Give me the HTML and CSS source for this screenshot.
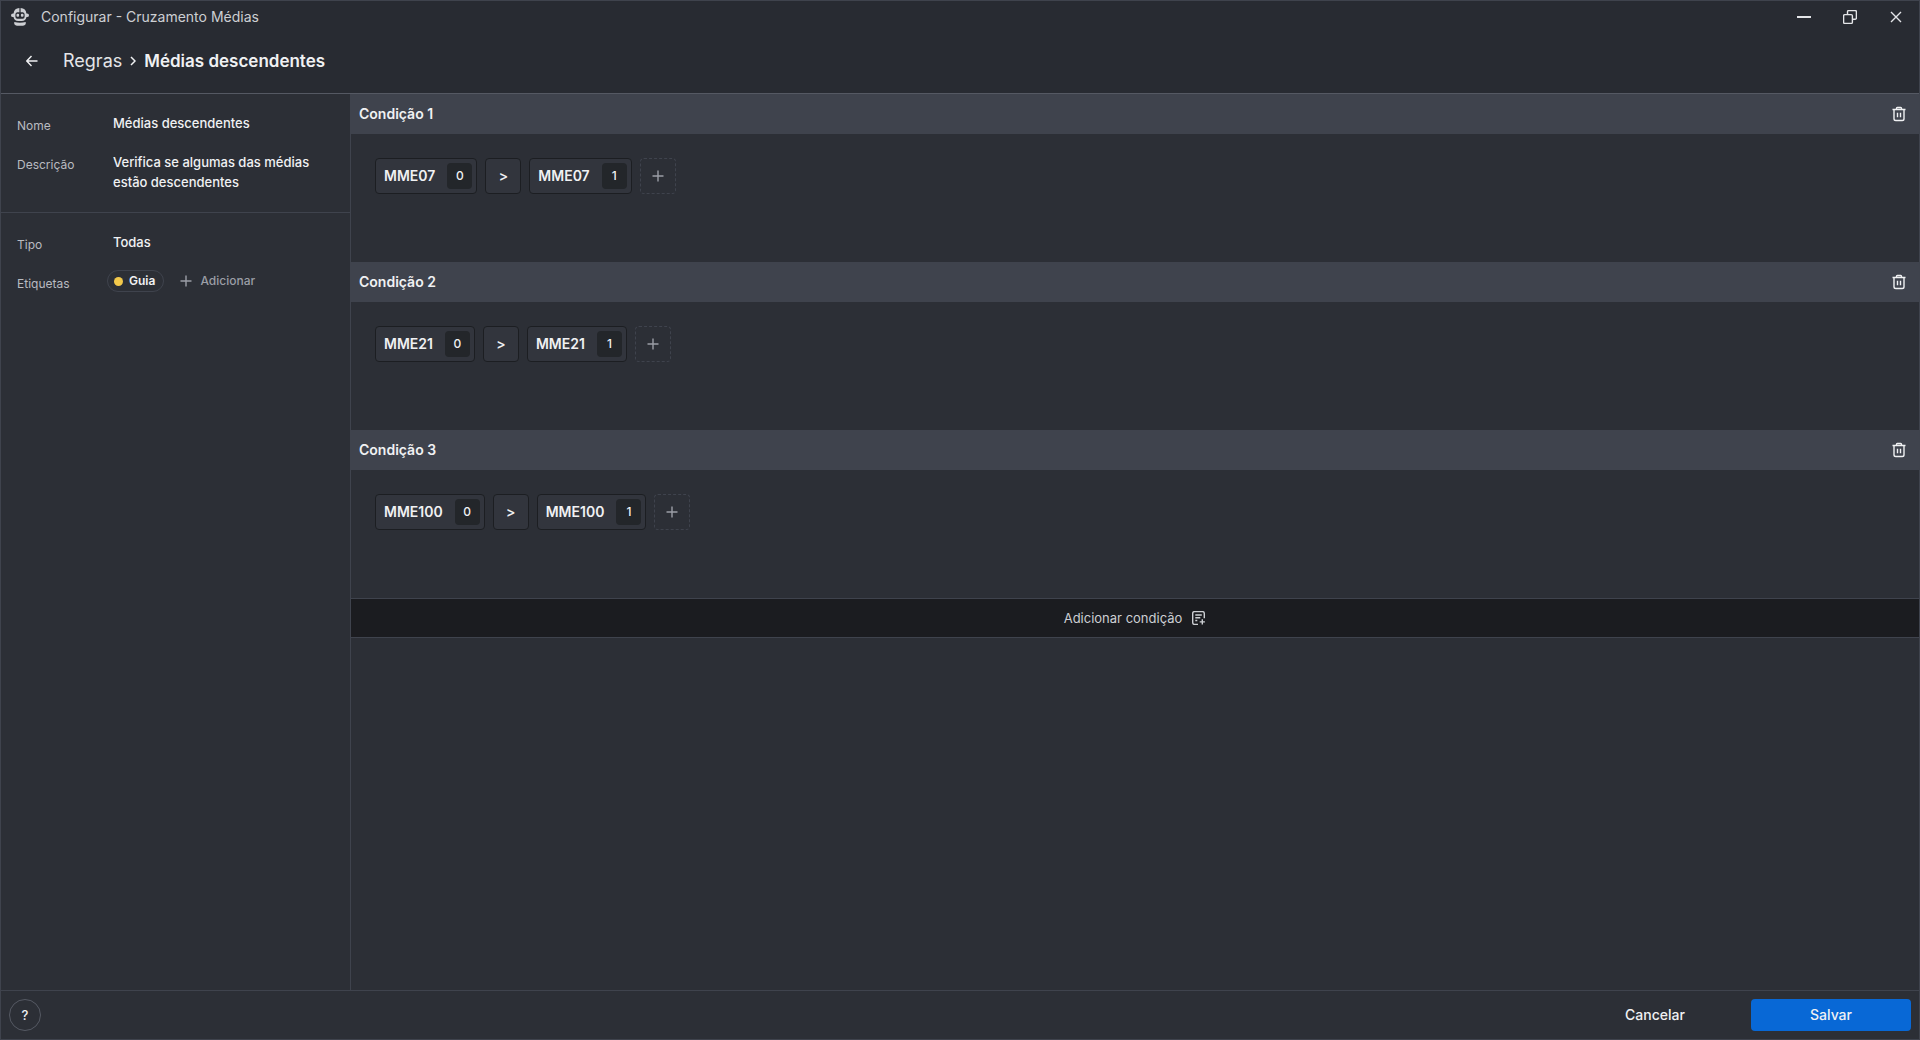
FILE: index.html
```
<!DOCTYPE html>
<html lang="pt-BR">
<head>
    <meta charset="UTF-8">
    <meta name="viewport" content="width=device-width, initial-scale=1.0">
    <title>Configurar - Cruzamento Médias</title>
    <link rel="stylesheet" href="styles.css">
</head>
<body>

<svg class="sprite" aria-hidden="true">
    <symbol id="icon-trash" viewBox="0 0 16 16">
        <path d="M1.5 3.5h13M5.5 3.5v-1.2q0-.8.8-.8h3.4q.8 0 .8.8v1.2M3 3.5v9.2q0 1.8 1.8 1.8h6.4q1.8 0 1.8-1.8V3.5M6.5 6.7v4.6M9.5 6.7v4.6"/>
    </symbol>
    <symbol id="icon-plus" viewBox="0 0 12 12">
        <path d="M6 .5v11M.5 6h11"/>
    </symbol>
</svg>

<div class="window">
    <header class="header">
        <div class="titlebar">
            <svg class="logo" viewBox="0 0 18 18">
                <path fill="currentColor" d="M8.4 0v4.2H6.2Q4.4 4.4 4.4 6.5v2.2q0 1.9 1.8 2h5.6q1.8-.1 1.8-2V6.5q0-2.1-1.8-2.3H9.6V0q5.4.5 5.8 5.4h.6q2 0 2 1.8t-2 1.9h-.5Q14.7 13 10.800 13H7.2Q3.300 13 2.5 9.1H2Q0 9 0 7.2t2-1.8h.6Q3 .5 8.4 0z"/>
                <rect x="5.5" y="5.8" width="2.6" height="3" rx="1" fill="currentColor"/>
                <rect x="9.9" y="5.8" width="2.6" height="3" rx="1" fill="currentColor"/>
                <path fill="currentColor" d="M3.3 14Q9 15.6 14.7 14 15.5 17 12 17.8H6Q2.5 17 3.3 14z"/>
            </svg>
            <span class="window-title">Configurar - Cruzamento Médias</span>
            <div class="window-controls">
                <button type="button" aria-label="Minimizar">
                    <svg width="14" height="14" viewBox="0 0 14 14"><path d="M0 7h14" stroke-width="2"/></svg>
                </button>
                <button type="button" aria-label="Restaurar">
                    <svg width="14" height="14" viewBox="0 0 14 14"><path d="M4.5 4V1.8Q4.5.6 5.7.6h6.500q1.200 0 1.200 1.200v6.300q0 1.200-1.200 1.200H10M1.800 4.600h6.400q1.200 0 1.200 1.200v6.400q0 1.200-1.200 1.200H1.800Q.6 13.400.6 12.200V5.800q0-1.200 1.200-1.200z"/></svg>
                </button>
                <button type="button" aria-label="Fechar">
                    <svg width="14" height="14" viewBox="0 0 14 14"><path d="M2 2l10 10M12 2L2 12" stroke-width="1.4"/></svg>
                </button>
            </div>
        </div>
        <nav class="breadcrumb">
            <button type="button" class="back" aria-label="Voltar">
                <svg width="12" height="12" viewBox="0 0 12 12"><path d="M11.5 6H1M5.5 1L.8 6l4.700 5"/></svg>
            </button>
            <a href="#">Regras</a>
            <svg class="chevron" width="6" height="10" viewBox="0 0 6 10"><path d="M1 1l4 4-4 4"/></svg>
            <h1>Médias descendentes</h1>
        </nav>
    </header>

    <div class="content">
        <aside class="sidebar">
            <section class="fields">
                <div class="field">
                    <label for="name">Nome</label>
                    <input type="text" id="name" value="Médias descendentes">
                </div>
                <div class="field">
                    <label for="description">Descrição</label>
                    <textarea id="description" rows="2">Verifica se algumas das médias estão descendentes</textarea>
                </div>
            </section>
            <section class="fields">
                <div class="field">
                    <label for="type">Tipo</label>
                    <select id="type">
                        <option>Todas</option>
                    </select>
                </div>
                <div class="field">
                    <span class="label">Etiquetas</span>
                    <div class="tags">
                        <span class="tag">Guia</span>
                        <button type="button" class="add-tag">
                            <svg width="12" height="12"><use href="#icon-plus"/></svg>
                            Adicionar
                        </button>
                    </div>
                </div>
            </section>
        </aside>

        <main class="conditions">
            <section class="condition">
                <div class="condition-header">
                    <h2>Condição 1</h2>
                    <button type="button" aria-label="Excluir condição 1"><svg width="16" height="16"><use href="#icon-trash"/></svg></button>
                </div>
                <div class="expression">
                    <button type="button" class="operand">MME07 <span>0</span></button>
                    <button type="button" class="operator">&gt;</button>
                    <button type="button" class="operand">MME07 <span>1</span></button>
                    <button type="button" class="add-term" aria-label="Adicionar termo"><svg width="12" height="12"><use href="#icon-plus"/></svg></button>
                </div>
            </section>
            <section class="condition">
                <div class="condition-header">
                    <h2>Condição 2</h2>
                    <button type="button" aria-label="Excluir condição 2"><svg width="16" height="16"><use href="#icon-trash"/></svg></button>
                </div>
                <div class="expression">
                    <button type="button" class="operand">MME21 <span>0</span></button>
                    <button type="button" class="operator">&gt;</button>
                    <button type="button" class="operand">MME21 <span>1</span></button>
                    <button type="button" class="add-term" aria-label="Adicionar termo"><svg width="12" height="12"><use href="#icon-plus"/></svg></button>
                </div>
            </section>
            <section class="condition">
                <div class="condition-header">
                    <h2>Condição 3</h2>
                    <button type="button" aria-label="Excluir condição 3"><svg width="16" height="16"><use href="#icon-trash"/></svg></button>
                </div>
                <div class="expression">
                    <button type="button" class="operand">MME100 <span>0</span></button>
                    <button type="button" class="operator">&gt;</button>
                    <button type="button" class="operand">MME100 <span>1</span></button>
                    <button type="button" class="add-term" aria-label="Adicionar termo"><svg width="12" height="12"><use href="#icon-plus"/></svg></button>
                </div>
            </section>
            <button type="button" class="add-condition">
                Adicionar condição
                <svg width="14" height="14" viewBox="0 0 14 14">
                    <path d="M6 13.4H2.6Q.7 13.4.7 11.5V2.5Q.7.6 2.6.6h7.800q1.900 0 1.900 1.900v4.800M3.300 4h6.500M3.300 6.800h5M3.300 9.500h2M10.300 8.300v5.200M7.700 10.900h5.200"/>
                </svg>
            </button>
        </main>
    </div>

    <footer class="footer">
        <button type="button" class="help" aria-label="Ajuda">?</button>
        <div class="actions">
            <button type="button" class="btn">Cancelar</button>
            <button type="button" class="btn btn-primary">Salvar</button>
        </div>
    </footer>
</div>

</body>
</html>
```
FILE: styles.css
```
/* General Styles */
* {
    box-sizing: border-box;
}

body {
    font-family: 'Inter', sans-serif;
    font-size: 14px;
    line-height: 20px;
    background-color: #2c2f36;
    color: #f0f1f3;
    margin: 0;
}

h1, h2 {
    margin: 0;
}

button, input, textarea, select {
    font: inherit;
    color: inherit;
    background: none;
    border: none;
    margin: 0;
    padding: 0;
}

button {
    display: flex;
    align-items: center;
    justify-content: center;
    cursor: pointer;
}

svg {
    fill: none;
    stroke: currentColor;
    stroke-width: 1.4;
    flex-shrink: 0;
}

.sprite {
    display: none;
}

.window {
    display: flex;
    flex-direction: column;
    height: 100vh;
    border: 1px solid #3f434d;
}

/* Header */
.header {
    background-color: #282b32;
    border-bottom: 1px solid #555963;
}

.titlebar {
    display: flex;
    align-items: center;
    height: 32px;
    padding: 0 0 0 10px;
    color: #cdcfd3;
}

.logo {
    width: 18px;
    height: 18px;
    stroke: none;
}

.window-title {
    margin-left: 12px;
}

.window-controls {
    display: flex;
    margin-left: auto;
    color: #e4e5e8;
}

.window-controls button {
    width: 46px;
    height: 32px;
}

.breadcrumb {
    display: flex;
    align-items: center;
    height: 60px;
    padding: 0 12px 4px 12px;
    font-size: 18px;
    line-height: 24px;
}

.breadcrumb a {
    color: #e4e5e8;
    text-decoration: none;
    margin-left: 12px;
}

.breadcrumb h1 {
    font-size: 17px;
    font-weight: 600;
}

.back {
    width: 38px;
    height: 38px;
}

.chevron {
    margin: 0 8px;
    stroke-width: 1.5;
}

.content {
    display: flex;
    flex: 1;
    min-height: 0;
}

/* Sidebar */
.sidebar {
    width: 350px;
    flex-shrink: 0;
    border-right: 1px solid #3f434d;
}

.fields {
    display: flex;
    flex-direction: column;
    gap: 19px;
    padding: 19px 16px 20px;
}

.fields + .fields {
    border-top: 1px solid #3f434d;
}

.field {
    display: flex;
    align-items: flex-start;
    min-height: 20px;
}

.field label,
.field .label {
    width: 96px;
    flex-shrink: 0;
    font-size: 12px;
    line-height: 26px;
    height: 20px;
    color: #b9bbc1;
}

.field input,
.field textarea,
.field select {
    flex: 1;
    min-width: 0;
    height: 20px;
    font-size: 13px;
    font-weight: 500;
    appearance: none;
    resize: none;
    outline: none;
}

.field textarea {
    height: 40px;
    overflow: hidden;
}

.tags {
    display: flex;
    align-items: center;
    gap: 16px;
    height: 20px;
    margin-left: -6px;
}

.tag {
    display: flex;
    align-items: center;
    gap: 6px;
    height: 22px;
    padding: 0 8px 0 6px;
    border: 1px solid #3f434d;
    border-radius: 11px;
    font-size: 12px;
    font-weight: 600;
}

.tag::before {
    content: "";
    width: 9px;
    height: 9px;
    border-radius: 50%;
    background-color: #f2c84b;
}

.add-tag {
    gap: 8px;
    font-size: 12px;
    font-weight: 500;
    color: #9b9ea6;
}

/* Conditions */
.conditions {
    flex: 1;
    min-width: 0;
    overflow: auto;
}

.condition-header {
    display: flex;
    align-items: center;
    justify-content: space-between;
    height: 40px;
    padding: 0 12px 0 8px;
    background-color: #3f434d;
}

.condition-header h2 {
    font-size: 14px;
    font-weight: 600;
}

.expression {
    display: flex;
    align-items: flex-start;
    gap: 8px;
    min-height: 128px;
    padding: 24px;
}

.operand,
.operator,
.add-term {
    height: 36px;
    min-width: 36px;
    border: 1px solid #1c1e22;
    border-radius: 4px;
    background-color: #32353d;
    font-weight: 600;
}

.operand {
    gap: 12px;
    padding: 0 4px 0 8px;
}

.operand span {
    min-width: 25px;
    background-color: #23262a;
    border-radius: 4px;
    font-size: 12px;
    font-weight: 500;
    line-height: 26px;
}

.add-term {
    background: none;
    border: 1px dashed #3f434d;
    color: #9b9ea6;
}

.add-condition {
    width: 100%;
    height: 40px;
    gap: 10px;
    background-color: #1b1c20;
    border: solid #3f434d;
    border-width: 1px 0;
    font-size: 13px;
    color: #cdcfd3;
}

/* Footer */
.footer {
    display: flex;
    align-items: center;
    justify-content: space-between;
    height: 49px;
    padding: 0 8px;
    border-top: 1px solid #3f434d;
}

.help {
    width: 32px;
    height: 32px;
    border: 1px solid #555963;
    border-radius: 50%;
    font-size: 13px;
    font-weight: 500;
}

.actions {
    display: flex;
    gap: 16px;
}

.btn {
    width: 160px;
    height: 32px;
    border-radius: 4px;
    font-weight: 500;
}

.btn-primary {
    background-color: #0868d6;
}
```
